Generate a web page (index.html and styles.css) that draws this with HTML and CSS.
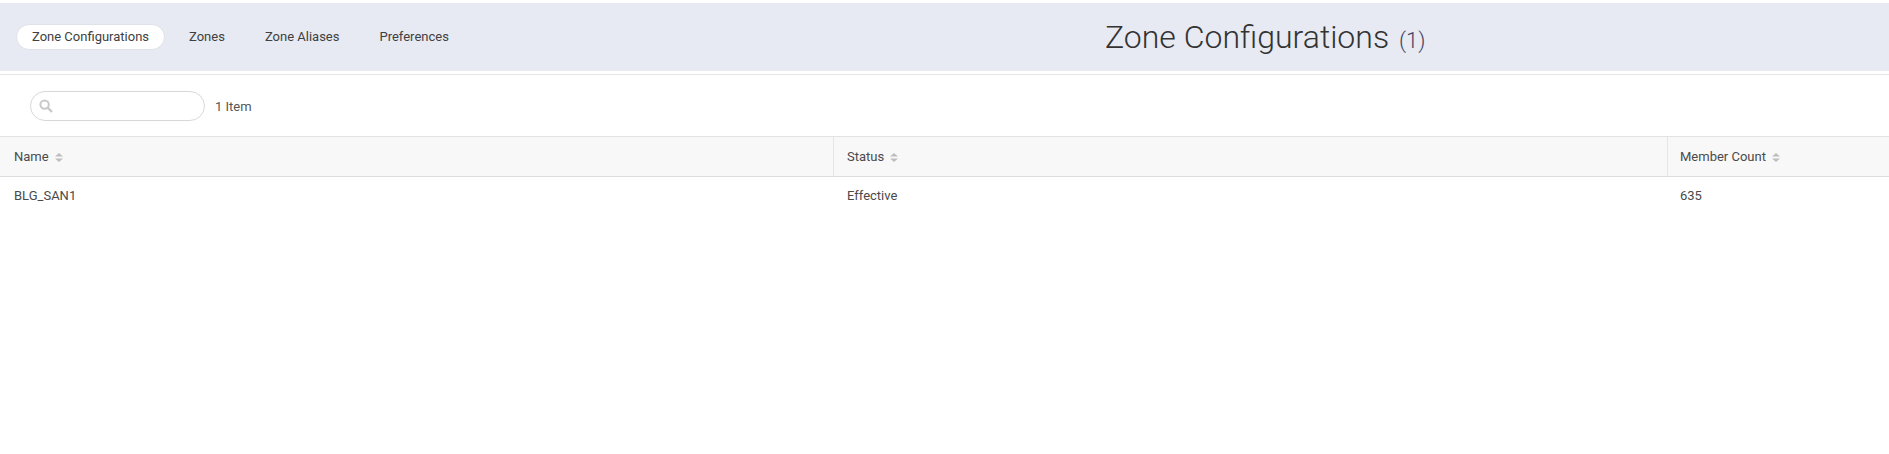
FILE: index.html
```html
<!DOCTYPE html>
<html lang="en">
<head>
  <meta charset="UTF-8">
  <title>Zone Configurations</title>
  <link rel="stylesheet" href="styles.css">
</head>
<body>
  <!-- Top band with tabs and page title -->
  <header class="topbar">
    <nav class="tabs">
      <a class="tab active">Zone Configurations</a>
      <a class="tab">Zones</a>
      <a class="tab">Zone Aliases</a>
      <a class="tab">Preferences</a>
    </nav>
    <h1 class="title">Zone Configurations <span class="count">(1)</span></h1>
  </header>

  <!-- Search row -->
  <div class="toolbar">
    <div class="search">
      <svg width="14" height="14" viewBox="0 0 14 14" fill="none" stroke="#c8c8c8">
        <circle cx="5.6" cy="5.6" r="4.2" stroke-width="2"/>
        <path d="M8.7 8.7 L13 13" stroke-width="2.4"/>
      </svg>
    </div>
    <span class="item-count">1 Item</span>
  </div>

  <!-- Table -->
  <div class="grid">
    <div class="cell head">Name <svg class="sort" width="8" height="9" viewBox="0 0 8 9"><path d="M4 0 L8 3.6 H0 Z M0 5.4 H8 L4 9 Z"/></svg></div>
    <div class="cell head">Status <svg class="sort" width="8" height="9" viewBox="0 0 8 9"><path d="M4 0 L8 3.6 H0 Z M0 5.4 H8 L4 9 Z"/></svg></div>
    <div class="cell head">Member Count <svg class="sort" width="8" height="9" viewBox="0 0 8 9"><path d="M4 0 L8 3.6 H0 Z M0 5.4 H8 L4 9 Z"/></svg></div>
    <div class="cell">BLG_SAN1</div>
    <div class="cell">Effective</div>
    <div class="cell last">635</div>
  </div>
</body>
</html>
```

FILE: styles.css
```css
body {
  margin: 0;
  padding-top: 3px;
  background-color: #fff;
  color: #4a4a4a;
  font-family: Roboto, Arial, sans-serif;
  font-size: 13px;
  overflow: hidden;
}

/* Top band */
.topbar {
  display: flex;
  align-items: center;
  height: 68px;
  padding-left: 16px;
  background-color: #e7eaf2;
}

.tabs {
  display: flex;
  align-items: center;
  width: 1089px;
  gap: 8px;
}

.tab {
  padding: 0 15px;
  height: 24px;
  line-height: 24px;
  border: 1px solid transparent;
  border-radius: 13px;
  color: #404040;
}

.tab.active {
  background-color: #fff;
  border-color: #dfe2ea;
}

.title {
  margin: 0;
  font-size: 32px;
  font-weight: 300;
  color: #333;
}

.count {
  margin-left: 2px;
  font-size: 22px;
  color: #444466;
}

/* Search row */
.toolbar {
  display: flex;
  align-items: center;
  gap: 10px;
  height: 61px;
  margin-top: 3px;
  padding-left: 30px;
  border-top: 1px solid #e4e4e4;
  border-bottom: 1px solid #e2e2e2;
}

.search {
  display: flex;
  align-items: center;
  box-sizing: border-box;
  width: 175px;
  height: 30px;
  padding-left: 8px;
  border: 1px solid #d8d8d8;
  border-radius: 15px;
}

.item-count {
  padding-top: 2px;
  color: #555;
}

/* Table */
.grid {
  display: grid;
  grid-template-columns: 833px 834px 1fr;
}

.cell {
  padding: 11px 14px 0;
  height: 38px;
  box-sizing: border-box;
}

.cell.last {
  padding-left: 13px;
}

.head {
  height: 40px;
  padding: 12px 13px 0;
  background-color: #f8f8f8;
  border-bottom: 1px solid #dcdcdc;
  border-left: 1px solid #e6e6e6;
}

.head:first-child {
  border-left: 0;
  padding-left: 14px;
}

.head:nth-child(3) {
  padding-left: 12px;
}

.sort {
  margin-left: 3px;
  vertical-align: -1px;
  fill: #bdbdbd;
}
```
